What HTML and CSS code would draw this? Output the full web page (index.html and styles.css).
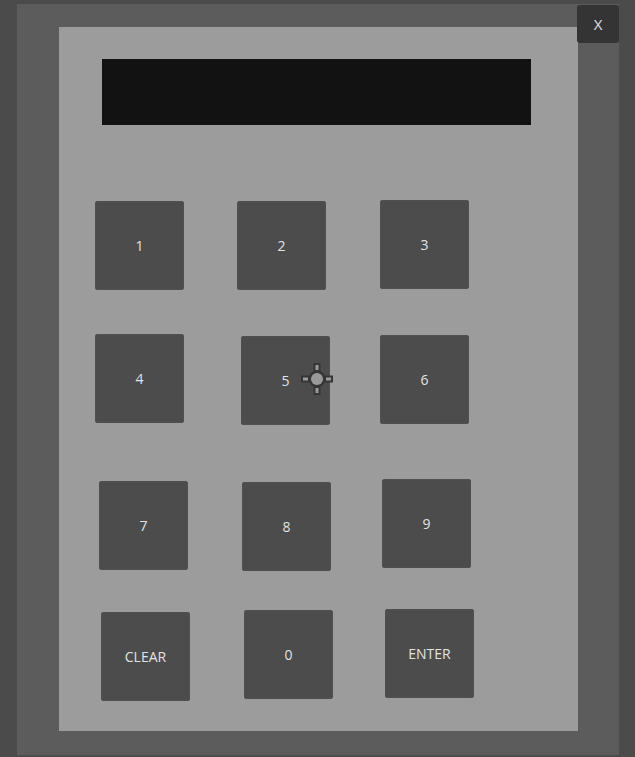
FILE: index.html
```html
<!DOCTYPE html>
<html>
<head>
<meta charset="utf-8">
<link rel="stylesheet" href="styles.css">
</head>
<body>
<div class="frame">
  <div class="panel">
    <div class="display"></div>
    <div class="keypad">
      <div class="key k1">1</div>
      <div class="key k2">2</div>
      <div class="key k3">3</div>
      <div class="key k4">4</div>
      <div class="key k5">5</div>
      <div class="key k6">6</div>
      <div class="key k7">7</div>
      <div class="key k8">8</div>
      <div class="key k9">9</div>
      <div class="key kc">CLEAR</div>
      <div class="key k0">0</div>
      <div class="key ke">ENTER</div>
    </div>
  </div>
</div>
<div class="close">X</div>
<svg class="cursor" width="32" height="32" viewBox="0 0 32 32">
  <g fill="#363636">
    <rect x="12.5" y="0" width="7" height="11"/>
    <rect x="12.5" y="21" width="7" height="11"/>
    <rect x="0" y="12.5" width="11" height="7"/>
    <rect x="21" y="12.5" width="11" height="7"/>
    <circle cx="16" cy="16" r="8.5"/>
  </g>
  <g fill="#9a9a9a">
    <rect x="14.5" y="2" width="3" height="5"/>
    <rect x="14.5" y="25" width="3" height="5"/>
    <rect x="2" y="14.5" width="5" height="3"/>
    <rect x="25" y="14.5" width="5" height="3"/>
    <circle cx="16" cy="16" r="6"/>
  </g>
</svg>
</body>
</html>
```
FILE: styles.css
```css
html, body {
  margin: 0;
  padding: 0;
}
body {
  width: 635px;
  height: 757px;
  background: #4b4b4b;
  font-family: "Open Sans", "Noto Sans", sans-serif;
  position: relative;
  overflow: hidden;
}
.frame {
  margin: 4px 0 0 17px;
  width: 602px;
  height: 751px;
  background: #5c5c5c;
  padding: 23px 0 0 42px;
  box-sizing: border-box;
}
.panel {
  width: 519px;
  height: 704px;
  background: #9c9c9c;
  padding: 32px 0 0 43px;
  box-sizing: border-box;
}
.display {
  width: 429px;
  height: 66px;
  background: #121212;
}
.keypad {
  margin: 75px 0 0 -7px;
  display: grid;
  grid-template-columns: 142px 143px 100px;
  grid-template-rows: 134px 145px 130px 89px;
  align-items: start;
  justify-items: start;
}
.key {
  width: 89px;
  height: 89px;
  background: #4c4c4c;
  border-radius: 3px;
  color: #e2e2e2;
  font-size: 14px;
  display: flex;
  align-items: center;
  justify-content: center;
  padding-bottom: 1px;
  box-sizing: border-box;
  box-shadow: inset 0 0 0 1px #505050;
}
.k1 { margin: 1px 0 0 0; }
.k2 { margin: 1px 0 0 0; }
.k3 { margin: 0 0 0 0; }
.k4 { margin: 0 0 0 0; }
.k5 { margin: 2px 0 0 4px; }
.k6 { margin: 1px 0 0 0; }
.k7 { margin: 2px 0 0 4px; }
.k8 { margin: 3px 0 0 5px; }
.k9 { margin: 0 0 0 2px; }
.kc { margin: 3px 0 0 6px; }
.k0 { margin: 1px 0 0 7px; }
.ke { margin: 0 0 0 5px; }
.close {
  position: absolute;
  left: 577px;
  top: 5px;
  width: 42px;
  height: 38px;
  background: #343434;
  border-radius: 3px;
  color: #e0e0e0;
  font-size: 15px;
  display: flex;
  align-items: center;
  justify-content: center;
}
.cursor {
  position: absolute;
  left: 301px;
  top: 363px;
}
```
